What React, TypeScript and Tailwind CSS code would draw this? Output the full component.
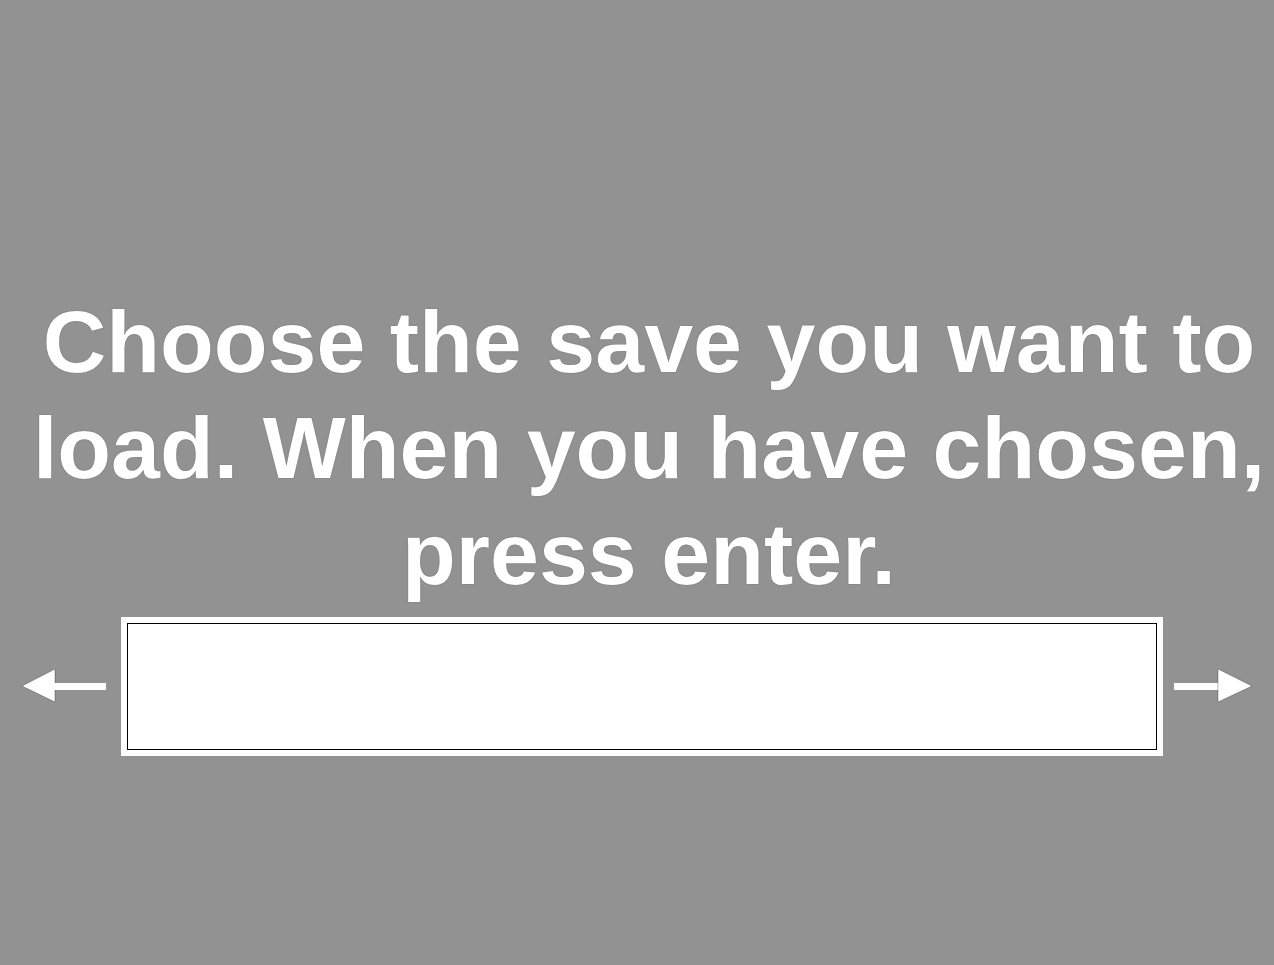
export default function App() {
  return (
    <div className="min-h-[965px] w-full bg-[#929292] font-['Liberation_Sans',Arial,sans-serif]">
      <div className="h-[289px]" />
      {/* Prompt */}
      <p className="pl-[24px] text-center text-[88px] font-bold leading-[106px] text-white [text-shadow:0_0_1px_rgba(0,0,0,0.55)]">
        Choose the save you want to load. When you have chosen, press enter.
      </p>

      {/* Slot picker */}
      <div className="mt-[10px] flex items-center pl-[22px]">
        <svg width="84" height="36" viewBox="0 0 84 36" className="shrink-0">
          <polygon points="0,17 33,0 33,33" fill="#fff" stroke="rgba(0,0,0,0.45)" strokeWidth="0.6" />
          <rect x="32" y="14" width="52" height="7" fill="#fff" />
        </svg>
        <div className="ml-[15px] h-[139px] w-[1042px] shrink-0 bg-white p-[6px]">
          <div className="h-full w-full border border-black bg-white" />
        </div>
        <svg width="84" height="36" viewBox="0 0 84 36" className="ml-[11px] shrink-0">
          <rect x="0" y="14" width="45" height="7" fill="#fff" />
          <polygon points="44,0 78,17 44,33" fill="#fff" stroke="rgba(0,0,0,0.45)" strokeWidth="0.6" />
        </svg>
      </div>
    </div>
  );
}
